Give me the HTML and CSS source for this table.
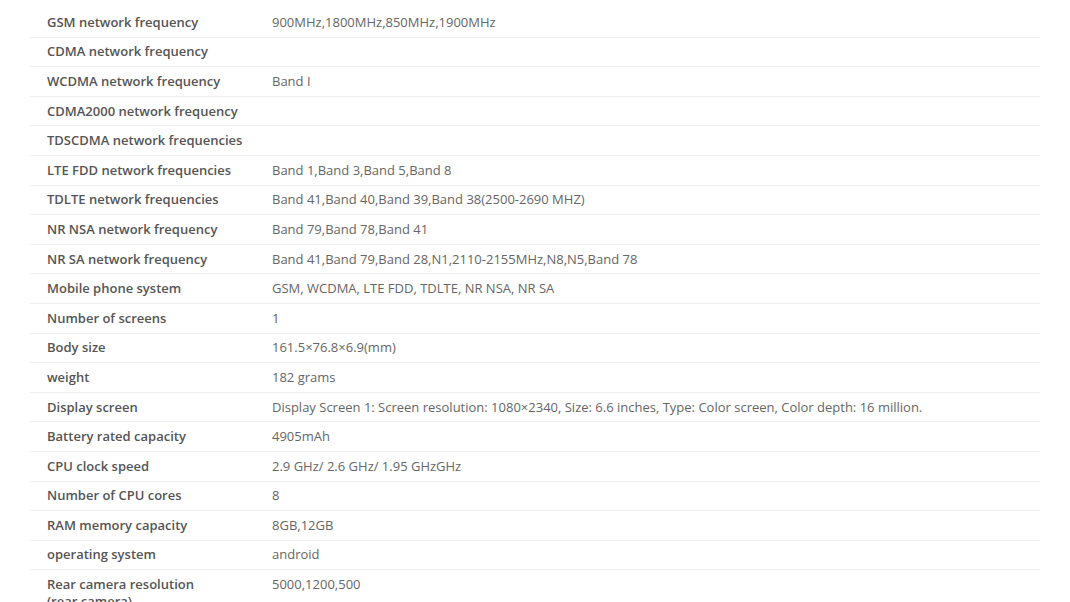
FILE: index.html
```html
<!DOCTYPE html>
<html>
<head>
<meta charset="utf-8">
<link rel="stylesheet" href="styles.css">
</head>
<body>
<div class="page">
<table class="spec">
<tr><th>GSM network frequency</th><td>900MHz,1800MHz,850MHz,1900MHz</td></tr>
<tr><th>CDMA network frequency</th><td></td></tr>
<tr><th>WCDMA network frequency</th><td>Band I</td></tr>
<tr><th>CDMA2000 network frequency</th><td></td></tr>
<tr><th>TDSCDMA network frequencies</th><td></td></tr>
<tr><th>LTE FDD network frequencies</th><td>Band 1,Band 3,Band 5,Band 8</td></tr>
<tr><th>TDLTE network frequencies</th><td>Band 41,Band 40,Band 39,Band 38(2500-2690 MHZ)</td></tr>
<tr><th>NR NSA network frequency</th><td>Band 79,Band 78,Band 41</td></tr>
<tr><th>NR SA network frequency</th><td>Band 41,Band 79,Band 28,N1,2110-2155MHz,N8,N5,Band 78</td></tr>
<tr><th>Mobile phone system</th><td>GSM, WCDMA, LTE FDD, TDLTE, NR NSA, NR SA</td></tr>
<tr><th>Number of screens</th><td>1</td></tr>
<tr><th>Body size</th><td>161.5×76.8×6.9(mm)</td></tr>
<tr><th>weight</th><td>182 grams</td></tr>
<tr><th>Display screen</th><td>Display Screen 1: Screen resolution: 1080×2340, Size: 6.6 inches, Type: Color screen, Color depth: 16 million.</td></tr>
<tr><th>Battery rated capacity</th><td>4905mAh</td></tr>
<tr><th>CPU clock speed</th><td>2.9 GHz/ 2.6 GHz/ 1.95 GHzGHz</td></tr>
<tr><th>Number of CPU cores</th><td>8</td></tr>
<tr><th>RAM memory capacity</th><td>8GB,12GB</td></tr>
<tr><th>operating system</th><td>android</td></tr>
<tr><th>Rear camera resolution <span class="nowrap">(rear camera)</span></th><td>5000,1200,500</td></tr>
</table>
</div>
</body>
</html>
```
FILE: styles.css
```css
html, body {
  margin: 0;
  padding: 0;
  background: #fff;
}
.page {
  padding: 8px 30px 0 30px;
}
.spec {
  width: 1010px;
  border-collapse: collapse;
  font-family: "Open Sans", "Noto Sans", sans-serif;
  font-size: 13px;
}
.spec tr {
  border-bottom: 1px solid #eeeeee;
}
.spec th {
  width: 208px;
  padding: 5.8px 8px 5.8px 17px;
  text-align: left;
  font-weight: 600;
  color: #555;
  line-height: 17px;
  vertical-align: top;
}
.spec td {
  padding: 5.8px 8px 5.8px 9px;
  color: #666;
  line-height: 17px;
  vertical-align: top;
}
.nowrap {
  white-space: nowrap;
}
```
